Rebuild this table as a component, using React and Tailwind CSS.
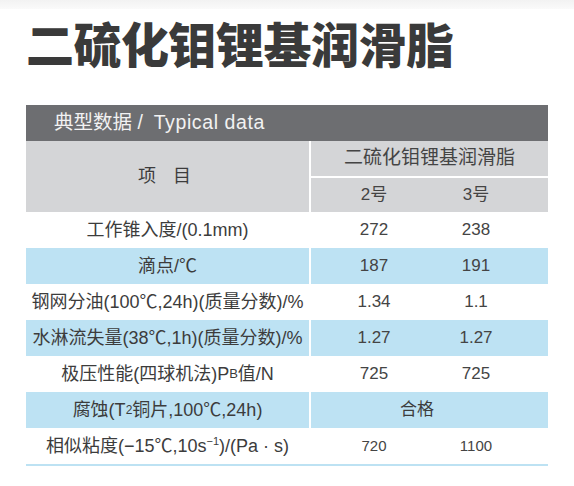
import React from 'react';

const font = { fontFamily: '"Liberation Sans", "Noto Sans CJK SC", sans-serif' };

const rows = [
  { label: '工作锥入度/(0.1mm)', a: '272', b: '238' },
  { label: '滴点/℃', a: '187', b: '191', blue: true },
  { label: '钢网分油(100℃,24h)(质量分数)/%', a: '1.34', b: '1.1' },
  { label: '水淋流失量(38℃,1h)(质量分数)/%', a: '1.27', b: '1.27', blue: true },
  {
    label: (
      <>
        极压性能(四球机法)P<span className="text-[13px]">B</span>值/N
      </>
    ),
    a: '725',
    b: '725',
  },
  {
    label: (
      <>
        腐蚀(T<span className="text-[12px]">2</span>铜片,100℃,24h)
      </>
    ),
    merged: '合格',
    blue: true,
  },
  {
    label: (
      <>
        相似粘度(−15℃,10s<sup className="text-[11px]">−1</sup>)/(Pa · s)
      </>
    ),
    a: '720',
    b: '1100',
    small: true,
  },
];

function Row({ row }) {
  const bg = row.blue ? 'bg-[#bde2f3]' : 'bg-white';
  return (
    <div className={`flex h-[36px] ${bg}`}>
      <div className="w-[283px] flex items-center justify-center text-[18px] text-[#3c3c3c] whitespace-nowrap">
        {row.label}
      </div>
      <div className={`w-[2px] ${row.blue ? 'bg-white' : ''}`} />
      {row.merged ? (
        <div className="flex-1 flex items-center justify-center pr-[25px] text-[17px] text-[#3c3c3c]">
          {row.merged}
        </div>
      ) : (
        <div className={`flex-1 flex items-center ${row.small ? 'text-[15px]' : 'text-[17px]'} text-[#444]`}>
          <div className="w-[126px] text-center">{row.a}</div>
          <div className="w-[78px] text-center">{row.b}</div>
        </div>
      )}
    </div>
  );
}

export default function App() {
  return (
    <div className="w-[574px] h-[486px] bg-white overflow-hidden" style={font}>
      <div className="h-[9px] bg-gradient-to-b from-[#f2f2f2] to-[#fafafa]" />

      {/* Title */}
      <h1
        className="ml-[26px] mt-[4px] text-[48px] leading-[58px] font-black text-[#3a3a3a] tracking-[-0.5px]"
        style={{ fontFamily: '"Noto Sans CJK SC", sans-serif' }}
      >
        二硫化钼锂基润滑脂
      </h1>

      {/* Table */}
      <div className="ml-[26px] mt-[34px] w-[522px]">
        <div className="h-[36px] bg-[#6d6e71] flex items-center pl-[28px] text-[19.5px] text-[#f2f2f2] whitespace-nowrap">
          典型数据 /&nbsp;&nbsp;<span className="tracking-[0.6px]">Typical data</span>
        </div>

        <div className="flex h-[71px] bg-[#d4d5d7]">
          <div className="w-[283px] flex items-center justify-center text-[18px] text-[#3c3c3c] tracking-[6px]">
            项 目
          </div>
          <div className="w-[2px] bg-white" />
          <div className="flex-1 flex flex-col">
            <div className="h-[35px] flex items-center justify-center text-[19px] text-[#444]">
              二硫化钼锂基润滑脂
            </div>
            <div className="h-[2px] bg-white" />
            <div className="flex-1 flex items-center text-[17px] text-[#444]">
              <div className="w-[126px] text-center">2号</div>
              <div className="w-[78px] text-center">3号</div>
            </div>
          </div>
        </div>

        {rows.map((row, i) => (
          <Row key={i} row={row} />
        ))}
        <div className="h-[2px] bg-[#bde2f3]" />
      </div>
    </div>
  );
}
